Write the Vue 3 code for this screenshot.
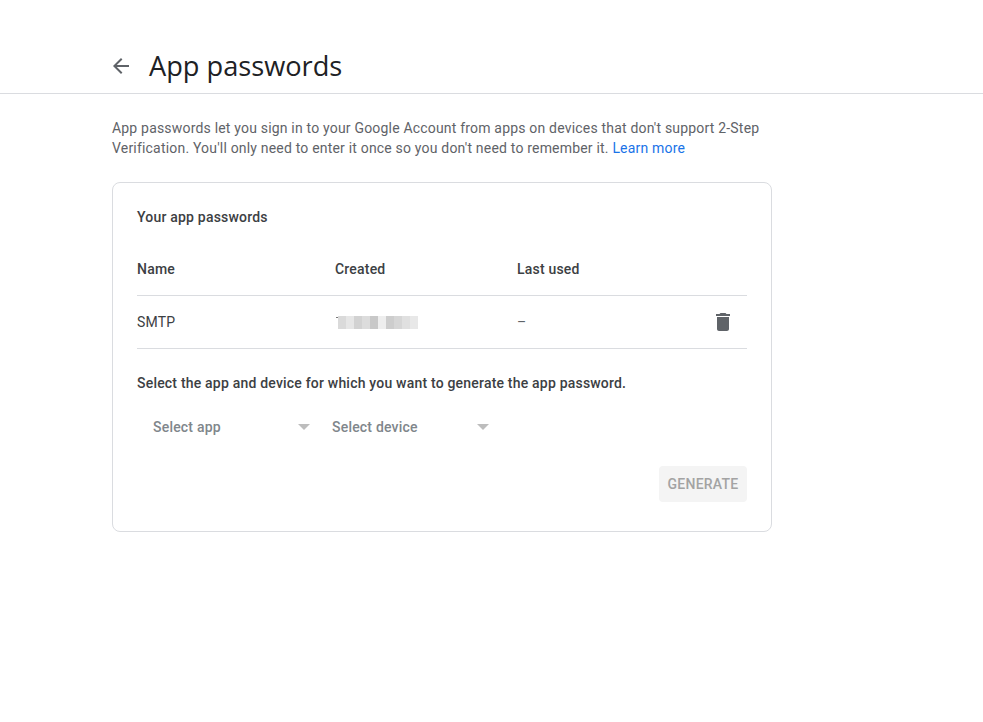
<template>
  <div class="page">
    <header class="top-bar">
      <button class="back" aria-label="Back">
        <svg width="24" height="24" viewBox="0 0 24 24"><path d="M20 11H7.83l5.59-5.59L12 4l-8 8 8 8 1.41-1.41L7.83 13H20v-2z" fill="#5f6368" /></svg>
      </button>
      <h1>App passwords</h1>
    </header>

    <main class="content">
      <p class="intro">
        App passwords let you sign in to your Google Account from apps on devices that don't support 2-Step
        Verification. You'll only need to enter it once so you don't need to remember it.
        <a href="#" class="link">Learn more</a>
      </p>

      <section class="card">
        <h2>Your app passwords</h2>

        <div class="row head">
          <div class="col-name">Name</div>
          <div class="col-created">Created</div>
          <div class="col-used">Last used</div>
        </div>

        <div class="row item">
          <div class="col-name">SMTP</div>
          <div class="col-created">
            <div class="blurred">
              <span class="tick" />
              <span v-for="(c, idx) in blurColors" :key="idx" class="blur-cell" :style="{ background: c }" />
            </div>
          </div>
          <div class="col-used">–</div>
          <svg class="trash" width="24" height="24" viewBox="0 0 24 24"><path d="M6 19c0 1.1.9 2 2 2h8c1.1 0 2-.9 2-2V7H6v12zM19 4h-3.5l-1-1h-5l-1 1H5v2h14V4z" fill="#5f6368" /></svg>
        </div>

        <p class="select-label">Select the app and device for which you want to generate the app password.</p>

        <div class="selects">
          <div class="select app">
            <span>Select app</span>
            <i class="caret" />
          </div>
          <div class="select device">
            <span>Select device</span>
            <i class="caret" />
          </div>
        </div>

        <div class="actions">
          <button class="generate" disabled>GENERATE</button>
        </div>
      </section>
    </main>
  </div>
</template>

<script setup>
const blurColors = ['#dadada', '#e6e6e6', '#d2d2d2', '#dcdcdc', '#c8c8c8', '#eeeeee', '#cdcdcd', '#d6d6d6', '#e0e0e0', '#e8e8e8']
</script>

<style>
html, body {
  margin: 0;
  background: #fff;
}
</style>

<style scoped>
.page {
  min-height: 722px;
  font-family: Roboto, "Liberation Sans", sans-serif;
  color: #3c4043;
  font-size: 14px;
}

.top-bar {
  display: flex;
  align-items: center;
  height: 54px;
  padding: 39px 0 0 109px;
  border-bottom: 1px solid #dadce0;
}

.back {
  width: 24px;
  height: 24px;
  padding: 0;
  border: 0;
  background: none;
}

h1 {
  margin: -2px 0 0 16px;
  font-family: "Open Sans", sans-serif;
  font-size: 27.2px;
  font-weight: 400;
  color: #202124;
}

.content {
  width: 660px;
  margin-left: 112px;
}

.intro {
  margin: 24px 0 0;
  font-size: 14px;
  line-height: 20px;
  letter-spacing: 0.19px;
  color: #5f6368;
}

.link {
  color: #1a73e8;
  text-decoration: none;
}

.card {
  margin-top: 24px;
  height: 350px;
  box-sizing: border-box;
  padding: 0 24px;
  border: 1px solid #dadce0;
  border-radius: 8px;
}

h2 {
  margin: 24px 0 0;
  font-size: 14px;
  line-height: 20px;
  font-weight: 500;
  letter-spacing: 0.2px;
  color: #3c4043;
}

.row {
  display: flex;
  position: relative;
  box-sizing: border-box;
  border-bottom: 1px solid #dadce0;
  letter-spacing: 0.2px;
  font-size: 14px;
}

.head {
  height: 69px;
  padding-top: 34px;
  font-weight: 500;
  color: #3c4043;
}

.item {
  height: 53px;
  align-items: center;
  color: #3c4043;
}

.col-name {
  width: 198px;
}

.col-created {
  width: 182px;
}

.col-used {
  flex: 1;
  color: #5f6368;
}

.head .col-used {
  color: #3c4043;
}

.blurred {
  display: flex;
  position: relative;
  margin-left: 3px;
  height: 13px;
}

.blur-cell {
  width: 8px;
  height: 13px;
}

.tick {
  position: absolute;
  left: -2px;
  top: 1px;
  width: 2px;
  height: 1px;
  background: #777;
}

.trash {
  margin-right: 12px;
}

.select-label {
  margin: 24px 0 0;
  font-size: 14px;
  line-height: 20px;
  font-weight: 500;
  letter-spacing: 0.2px;
  color: #3c4043;
}

.selects {
  display: flex;
  gap: 22px;
  margin-top: 16px;
}

.select {
  height: 36px;
  display: flex;
  align-items: center;
  justify-content: space-between;
  font-size: 14px;
  font-weight: 500;
  letter-spacing: 0.2px;
  color: #80868b;
}

.app {
  width: 157px;
  padding-left: 16px;
}

.device {
  width: 157px;
}

.caret {
  width: 0;
  height: 0;
  border-left: 6.5px solid transparent;
  border-right: 6.5px solid transparent;
  border-top: 6px solid #bdbdbd;
}

.actions {
  display: flex;
  justify-content: flex-end;
  margin-top: 21px;
}

.generate {
  width: 88px;
  height: 36px;
  border: 0;
  border-radius: 4px;
  background: #f4f4f4;
  color: #a3a3a3;
  font-family: Roboto, sans-serif;
  font-size: 14px;
  font-weight: 500;
  letter-spacing: 0.25px;
  padding: 0;
}
</style>
